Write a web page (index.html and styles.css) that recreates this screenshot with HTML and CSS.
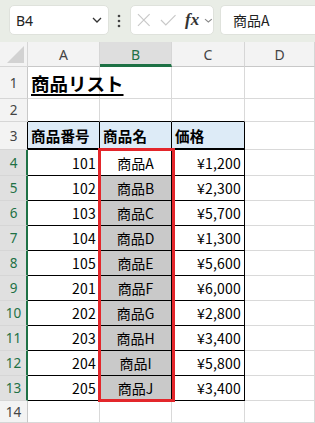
FILE: index.html
```html
<!DOCTYPE html>
<html lang="ja">
<head>
  <meta charset="UTF-8" />
  <meta name="viewport" content="width=device-width, initial-scale=1.0"/>
  <title>商品リスト</title>
  <link rel="stylesheet" href="styles.css">
</head>
<body>

<div class="toolbar">
  <div class="namebox">
    <span>B4</span>
    <svg width="10" height="6" viewBox="0 0 10 6"><path d="M1 1l4 4 4-4" fill="none" stroke="#333" stroke-width="1.3"/></svg>
  </div>
  <svg class="more" width="4" height="14" viewBox="0 0 4 14"><circle cx="2" cy="2" r="1.3"/><circle cx="2" cy="7" r="1.3"/><circle cx="2" cy="12" r="1.3"/></svg>
  <div class="fxbox">
    <svg width="14" height="14" viewBox="0 0 14 14"><path d="M1 1l12 12M13 1L1 13" stroke="#c8c8c8" stroke-width="1.2"/></svg>
    <svg width="17" height="12" viewBox="0 0 17 12"><path d="M1 6l5 5L16 1" fill="none" stroke="#c8c8c8" stroke-width="1.2"/></svg>
    <span class="fx">fx</span>
    <svg width="9" height="5" viewBox="0 0 9 5"><path d="M1 1l3.5 3L8 1" fill="none" stroke="#888" stroke-width="1.1"/></svg>
  </div>
  <div class="formula">商品A</div>
</div>

<div class="sheet">
  <div class="row head">
    <div class="corner"><span class="tri"></span></div>
    <div class="colh">A</div>
    <div class="colh sel">B</div>
    <div class="colh">C</div>
    <div class="colh">D</div>
  </div>
  <div class="row r1">
    <div class="rowh">1</div>
    <div class="c title">商品リスト</div>
    <div class="c"></div>
    <div class="c"></div>
    <div class="c"></div>
  </div>
  <div class="row r2">
    <div class="rowh">2</div>
    <div class="c top"></div>
    <div class="c top"></div>
    <div class="c top"></div>
    <div class="c"></div>
  </div>
  <div class="row r3">
    <div class="rowh edge">3</div>
    <div class="c t th">商品番号</div>
    <div class="c t th">商品名</div>
    <div class="c t th">価格</div>
    <div class="c"></div>
  </div>
  <div class="row r4">
    <div class="rowh sel">4</div>
    <div class="c t num">101</div>
    <div class="c t name active">商品A</div>
    <div class="c t num">¥1,200</div>
    <div class="c"></div>
  </div>
  <div class="row">
    <div class="rowh sel">5</div>
    <div class="c t num">102</div>
    <div class="c t name">商品B</div>
    <div class="c t num">¥2,300</div>
    <div class="c"></div>
  </div>
  <div class="row">
    <div class="rowh sel">6</div>
    <div class="c t num">103</div>
    <div class="c t name">商品C</div>
    <div class="c t num">¥5,700</div>
    <div class="c"></div>
  </div>
  <div class="row">
    <div class="rowh sel">7</div>
    <div class="c t num">104</div>
    <div class="c t name">商品D</div>
    <div class="c t num">¥1,300</div>
    <div class="c"></div>
  </div>
  <div class="row">
    <div class="rowh sel">8</div>
    <div class="c t num">105</div>
    <div class="c t name">商品E</div>
    <div class="c t num">¥5,600</div>
    <div class="c"></div>
  </div>
  <div class="row">
    <div class="rowh sel">9</div>
    <div class="c t num">201</div>
    <div class="c t name">商品F</div>
    <div class="c t num">¥6,000</div>
    <div class="c"></div>
  </div>
  <div class="row">
    <div class="rowh sel">10</div>
    <div class="c t num">202</div>
    <div class="c t name">商品G</div>
    <div class="c t num">¥2,800</div>
    <div class="c"></div>
  </div>
  <div class="row">
    <div class="rowh sel">11</div>
    <div class="c t num">203</div>
    <div class="c t name">商品H</div>
    <div class="c t num">¥3,400</div>
    <div class="c"></div>
  </div>
  <div class="row">
    <div class="rowh sel">12</div>
    <div class="c t num">204</div>
    <div class="c t name">商品I</div>
    <div class="c t num">¥5,800</div>
    <div class="c"></div>
  </div>
  <div class="row">
    <div class="rowh sel">13</div>
    <div class="c t num">205</div>
    <div class="c t name">商品J</div>
    <div class="c t num">¥3,400</div>
    <div class="c"></div>
  </div>
  <div class="row r14">
    <div class="rowh">14</div>
    <div class="c"></div>
    <div class="c"></div>
    <div class="c"></div>
    <div class="c"></div>
  </div>

  <!-- red frame drawn over B4:B13 -->
  <div class="frame"></div>
</div>

</body>
</html>
```

FILE: styles.css
```css
* {
  box-sizing: border-box;
}
body {
  margin: 0;
  width: 315px;
  height: 423px;
  overflow: hidden;
  font-family: 'Noto Sans CJK JP', 'Noto Sans', sans-serif;
  color: #000;
  background: #fff;
}

/* formula bar */
.toolbar {
  height: 42px;
  background: #e9ede6;
  display: flex;
  align-items: flex-start;
  padding: 5px 0 0 9px;
  white-space: nowrap;
  overflow: hidden;
}
.namebox {
  width: 100px;
  height: 30px;
  background: #fff;
  border: 1px solid #dfe2dc;
  border-radius: 5px;
  display: flex;
  align-items: center;
  justify-content: space-between;
  padding: 0 6px 0 6px;
  font-family: 'Noto Sans', sans-serif;
  font-size: 14px;
  color: #222;
}
.more {
  fill: #444;
  margin: 9px 9px 0 8px;
}
.fxbox {
  width: 84px;
  height: 30px;
  background: #fff;
  border: 1px solid #dfe2dc;
  border-radius: 5px;
  display: flex;
  align-items: center;
  padding: 0 0 0 6px;
  gap: 9px;
}
.fx {
  font-family: 'Liberation Serif', serif;
  font-style: italic;
  font-weight: bold;
  font-size: 17px;
  color: #333;
  margin-right: -4px;
}
.formula {
  flex: 1;
  height: 30px;
  margin-left: 6px;
  background: #fff;
  border: 1px solid #dfe2dc;
  border-right: none;
  border-radius: 5px 0 0 5px;
  display: flex;
  align-items: center;
  padding-left: 12px;
  font-size: 14px;
  color: #222;
}

/* grid */
.sheet {
  position: relative;
}
.row {
  display: grid;
  grid-template-columns: 28px 72px 72px 73px 1fr;
  height: 25px;
}
.row.head { height: 25px; }
.row.r1 { height: 32px; }
.row.r2 { height: 23px; }
.row.r3 { height: 28px; }
.row.r4 { height: 26px; }
.row.r14 { height: 22px; }

.corner {
  position: relative;
  background: #f3f3f3;
  border-right: 1px solid #d6d6d6;
  border-bottom: 1px solid #d6d6d6;
}
.tri {
  position: absolute;
  right: 3px;
  bottom: 3px;
  width: 0;
  height: 0;
  border-left: 17px solid transparent;
  border-bottom: 17px solid #d2d2d2;
}
.colh {
  background: #f3f3f3;
  border-right: 1px solid #d6d6d6;
  border-bottom: 1px solid #c8c8c8;
  display: flex;
  align-items: center;
  justify-content: center;
  font-family: 'Noto Sans', sans-serif;
  font-size: 14px;
  color: #444;
}
.colh.sel {
  background: #dedede;
  color: #1e7145;
  border-bottom: 3px solid #1e7145;
  padding-top: 2px;
}
.rowh {
  background: #f3f3f3;
  border-right: 1px solid #c8c8c8;
  border-bottom: 1px solid #d6d6d6;
  display: flex;
  align-items: center;
  justify-content: center;
  font-family: 'Noto Sans', sans-serif;
  font-size: 13.5px;
  color: #444;
}
.rowh.edge {
  border-right-color: #000;
}
.rowh.sel {
  background: #e0e0e0;
  color: #1e7145;
  border-right: 2px solid #1e7145;
  padding-left: 1px;
}

.c {
  border-right: 1px solid #d9d9d9;
  border-bottom: 1px solid #d9d9d9;
  display: flex;
  align-items: center;
  font-size: 14px;
  padding: 0 3px;
  white-space: nowrap;
}
.c.top {
  border-bottom-color: #000;
}
.c.t {
  border-right-color: #000;
  border-bottom-color: #000;
}
.c.th {
  background: #ddebf7;
  font-weight: bold;
  font-size: 14.5px;
  border-bottom-width: 2px;
  letter-spacing: 0.2px;
}
.c.num {
  justify-content: flex-end;
  letter-spacing: 0.2px;
}
.c.name {
  justify-content: center;
  background: #c9c9c9;
}
.c.name.active {
  background: #fff;
}
.title {
  font-weight: bold;
  font-size: 18.5px;
  text-decoration: underline;
  text-decoration-thickness: 1.5px;
  text-underline-offset: 3px;
  overflow: visible;
}

.frame {
  position: absolute;
  left: 98px;
  top: 106px;
  width: 77px;
  height: 254px;
  border: 3.5px solid #e3262b;
}
```
